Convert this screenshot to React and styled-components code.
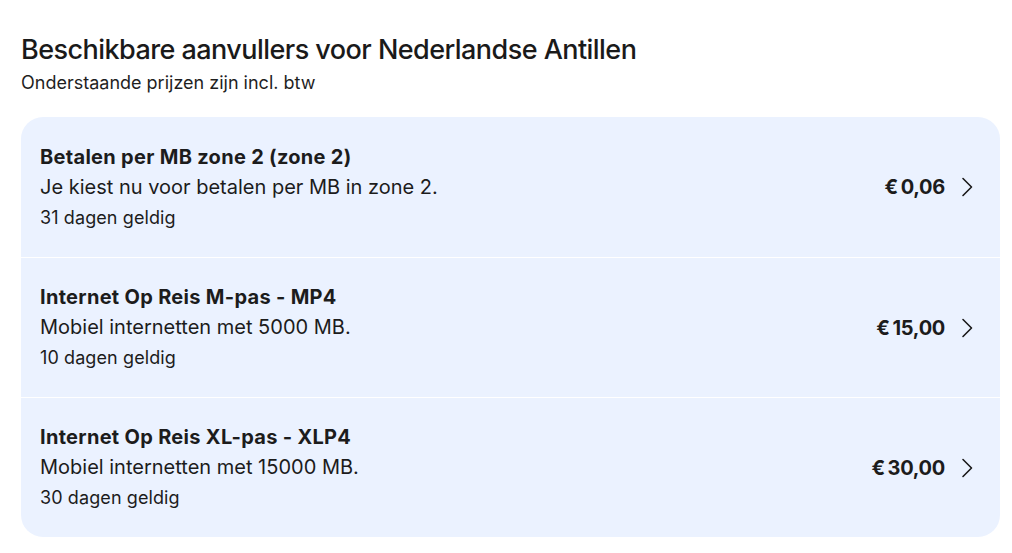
import React from "react";
import styled, { createGlobalStyle } from "styled-components";

const Global = createGlobalStyle`
  html, body { margin: 0; padding: 0; background: #ffffff; }
  body { font-family: Inter, "Noto Sans", sans-serif; color: #1c1c1c; }
`;

const Page = styled.main`
  padding: 34px 12px 16px 21px;
`;

const Title = styled.h1`
  margin: 0;
  font-size: 27px;
  font-weight: 500;
  letter-spacing: -0.55px;
  line-height: 32px;
  color: #1a1a1a;
`;

const Subtitle = styled.p`
  margin: 4px 0 0;
  font-size: 18px;
  line-height: 26px;
  font-weight: 400;
  color: #1f1f1f;
`;

const Card = styled.ul`
  list-style: none;
  margin: 21px 0 0;
  padding: 0;
  width: 979px;
  background: #ebf2ff;
  border-radius: 22px;
  overflow: hidden;
`;

const Row = styled.li`
  display: flex;
  align-items: center;
  height: 140px;
  padding: 0 26px 0 19px;
  box-sizing: border-box;
  border-top: ${(p) => (p.$first ? "none" : "1px solid #ffffff")};
`;

const Info = styled.div`
  flex: 1;
  display: flex;
  flex-direction: column;
`;

const Name = styled.div`
  font-size: 20px;
  font-weight: 700;
  line-height: 30px;
  letter-spacing: 0.3px;
`;

const Desc = styled.div`
  font-size: 20px;
  font-weight: 400;
  line-height: 31px;
`;

const Valid = styled.div`
  font-size: 18px;
  font-weight: 400;
  line-height: 30px;
  letter-spacing: 0.1px;
`;

const Price = styled.div`
  font-size: 20px;
  font-weight: 700;
  letter-spacing: -0.3px;
  margin-right: 15px;
`;

const Chevron = () => (
  <svg width="14" height="20" viewBox="0 0 14 20" fill="none">
    <path d="M3 1.5 L11.5 10 L3 18.5" stroke="#1a1a1a" strokeWidth="1.6" strokeLinecap="round" strokeLinejoin="round" />
  </svg>
);

const items = [
  { name: "Betalen per MB zone 2 (zone 2)", desc: "Je kiest nu voor betalen per MB in zone 2.", valid: "31 dagen geldig", price: "€\u20090,06" },
  { name: "Internet Op Reis M-pas - MP4", desc: "Mobiel internetten met 5000 MB.", valid: "10 dagen geldig", price: "€\u200915,00" },
  { name: "Internet Op Reis XL-pas - XLP4", desc: "Mobiel internetten met 15000 MB.", valid: "30 dagen geldig", price: "€\u200930,00" },
];

export default function App() {
  return (
    <>
      <Global />
      <Page>
        <Title>Beschikbare aanvullers voor Nederlandse Antillen</Title>
        <Subtitle>Onderstaande prijzen zijn incl. btw</Subtitle>
        <Card>
          {items.map((it, i) => (
            <Row key={i} $first={i === 0}>
              <Info>
                <Name>{it.name}</Name>
                <Desc>{it.desc}</Desc>
                <Valid>{it.valid}</Valid>
              </Info>
              <Price>{it.price}</Price>
              <Chevron />
            </Row>
          ))}
        </Card>
      </Page>
    </>
  );
}
